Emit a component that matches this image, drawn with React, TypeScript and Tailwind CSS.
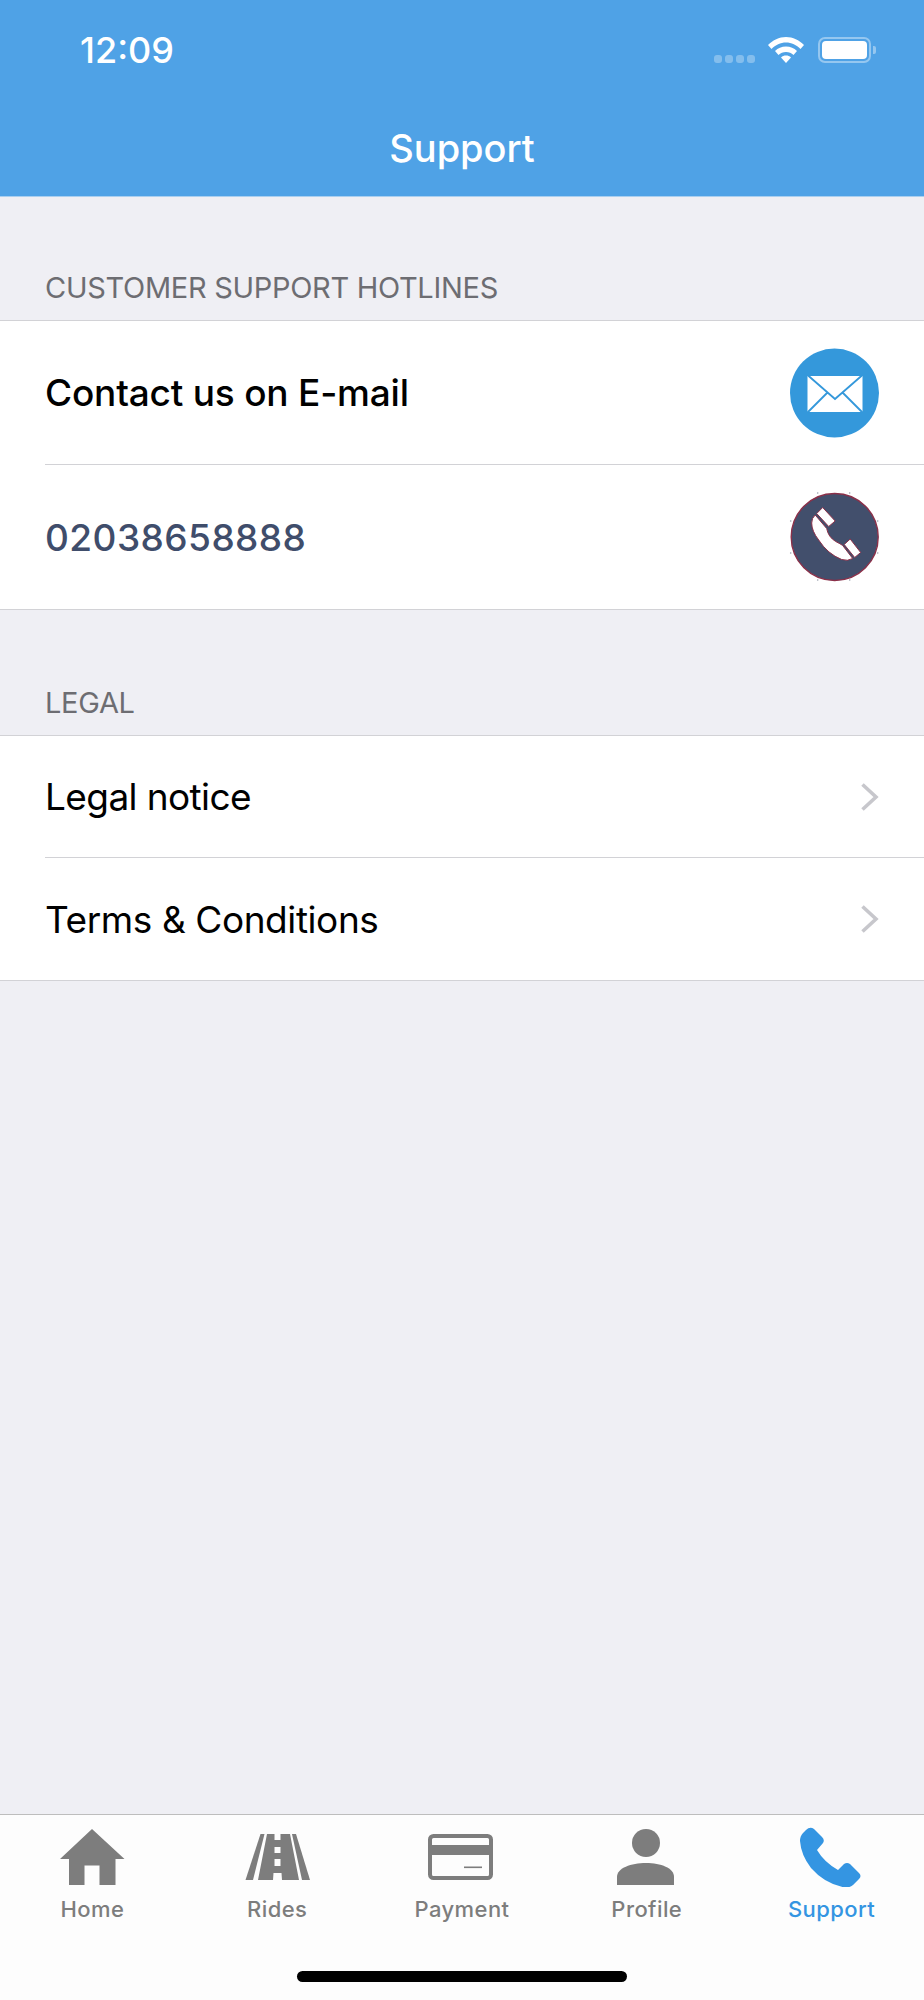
import React from "react";

const font = { fontFamily: "Inter, 'Liberation Sans', sans-serif" };

function Chevron() {
  return (
    <svg width="19" height="30" viewBox="0 0 19 30" fill="none" className="shrink-0">
      <path d="M2.5 2.5 L16 15 L2.5 27.5" stroke="#c7c7cc" strokeWidth="3.6" />
    </svg>
  );
}

function MailIcon() {
  return (
    <svg width="90" height="90" viewBox="0 0 90 90" className="shrink-0">
      <circle cx="45.5" cy="45" r="44.5" fill="#3498db" />
      <rect x="18.5" y="28" width="55" height="36" fill="#fff" />
      <path d="M18.5 27 L46 51 L73.5 27 M18.5 64.5 L38 45 M73.5 64.5 L54 45" fill="none" stroke="#3498db" strokeWidth="1.8" />
    </svg>
  );
}

function CallIcon() {
  const dots = [
    [28, 1], [60, 1], [1, 29], [1, 61], [88, 29], [88, 61], [28, 88], [60, 88],
  ];
  return (
    <svg width="90" height="90" viewBox="0 0 90 90" className="shrink-0">
      <g transform="translate(0.7 0)">
        <circle cx="45" cy="45" r="43.5" fill="#424f6c" stroke="#8b3049" strokeWidth="1.4" />
        {dots.map(([x, y]) => (
          <circle key={x * 100 + y} cx={x} cy={y} r="0.8" fill="#9aa0ad" />
        ))}
        <g fill="#fff" stroke="#8b3049" strokeWidth="1">
          <path d="M33 15.5 L45.5 29 L39 34.5 L27 21.5 Z" />
          <path d="M60.5 47 L71 60.5 L65 65.5 L54.5 52.5 Z" />
          <path d="M25.5 23 L37 36.5 Q38.5 45 46 49.5 Q51 52 53 53.5 L63 66.5 Q58 69.5 52 67.5 Q38 62 29 48 Q22 39 22 31 Q22 26 25.5 23 Z" />
        </g>
      </g>
    </svg>
  );
}

function TabIcon({ name }: { name: string }) {
  const c = "#7d7d7d";
  return (
    <svg width="80" height="60" viewBox="0 0 80 60">
      {name === "Home" && (
        <path fill={c} d="M40 2 L72.5 32 L63.5 32 L63.5 58 L47.5 58 L47.5 38.5 L32.5 38.5 L32.5 58 L17 58 L17 32 L8 32 Z" />
      )}
      {name === "Rides" && (
        <g fill={c}>
          <path d="M23.5 7 L27.5 7 L16 53 L8.5 53 Z" />
          <path d="M55 7 L59 7 L73 53 L65 53 Z" />
          <path fillRule="evenodd" d="M30 7 L53 7 L62 53 L21 53 Z M37.5 7 L37.5 13 L43.5 13 L43.5 7 Z M37.5 20 L37.5 26 L43.5 26 L43.5 20 Z M37.5 32 L37.5 39 L43.5 39 L43.5 32 Z M36.5 46 L36 53 L45 53 L44.5 46 Z" />
        </g>
      )}
      {name === "Payment" && (
        <g>
          <rect x="8" y="9" width="61" height="42" rx="3.5" fill="none" stroke={c} strokeWidth="4" />
          <rect x="8" y="18" width="61" height="10" fill={c} />
          <rect x="42" y="39.5" width="18" height="1.6" fill={c} />
        </g>
      )}
      {name === "Profile" && (
        <g fill={c}>
          <circle cx="39" cy="16" r="14" />
          <path d="M10 58 L10 50 C10 41 24 36 39 36 C54 36 67 41 67 50 L67 58 Z" />
        </g>
      )}
      {name === "Support" && (
        <path
          fill="#3495e2"
          transform="translate(8 0)"
          d="M6 3 Q10 -1 14 2 L22 10 Q25 13 23 16 L17 23 Q24 35 38 43 L44 37 Q47 35 50 37 L59 46 Q62 49 59 52 L53 58 Q49 61 45 60.5 Q25 57 11 41 Q1 28 0 14 Q0 9 3 6 Z"
        />
      )}
    </svg>
  );
}

function Sep() {
  return <div className="ml-[45px] h-px bg-[#d2d2d6]" />;
}

export default function App() {
  const tabs = ["Home", "Rides", "Payment", "Profile", "Support"];
  return (
    <div style={font} className="w-[924px] h-[2000px] flex flex-col bg-[#efeff4] overflow-hidden">
      <header className="h-[197px] shrink-0 bg-[#4fa2e6] border-b border-[#a9cff0] text-white">
        <div className="h-[64px] pt-[36px] pl-[80px] pr-[48px] flex items-center justify-between">
          <span className="text-[36px] leading-[44px] font-medium tracking-[0px]">12:09</span>
          <div className="flex items-center">
            <div className="flex gap-[3px] mt-[18px] mr-[13px]">
              <span className="w-[8px] h-[8px] rounded-[3px] bg-white/30" />
              <span className="w-[8px] h-[8px] rounded-[3px] bg-white/30" />
              <span className="w-[8px] h-[8px] rounded-[3px] bg-white/30" />
              <span className="w-[8px] h-[8px] rounded-[3px] bg-white/30" />
            </div>
            <svg width="36" height="26" viewBox="0 0 36 26" className="mr-[14px]">
              <path fill="#fff" d="M18 0 C25 0 31 3 36 8 L32.5 12 C28.5 8 23.5 5.5 18 5.5 C12.5 5.5 7.5 8 3.5 12 L0 8 C5 3 11 0 18 0 Z" />
              <path fill="#fff" d="M18 9.5 C22.5 9.5 26 11 29 14 L25.5 18 C23.5 16 21 15 18 15 C15 15 12.5 16 10.5 18 L7 14 C10 11 13.5 9.5 18 9.5 Z" />
              <path fill="#fff" d="M18 18.5 C20 18.5 21.5 19 23 20.5 L18 26 L13 20.5 C14.5 19 16 18.5 18 18.5 Z" />
            </svg>
            <div className="w-[53px] h-[26px] rounded-[7px] border-2 border-white/40 p-[2px]">
              <div className="w-full h-full rounded-[4px] bg-white" />
            </div>
            <span className="ml-[2px] w-[3px] h-[8px] rounded-r-[2px] bg-white/40" />
          </div>
        </div>
        <h1 className="mt-[60px] text-center text-[38px] leading-[48px] font-medium tracking-[-0.05px]">Support</h1>
      </header>

      <main className="flex-1">
        <div className="h-[123px] pl-[45px] pb-[14px] flex items-end">
          <span className="text-[29px] leading-[36px] text-[#6d6d72] tracking-[-0.3px]">CUSTOMER SUPPORT HOTLINES</span>
        </div>
        <section className="bg-white border-y border-[#d2d2d6]">
          <div className="h-[143px] pl-[45px] pr-[45px] flex items-center justify-between">
            <span className="text-[37px] font-medium text-black tracking-[-0.2px]">Contact us on E-mail</span>
            <MailIcon />
          </div>
          <Sep />
          <div className="h-[144px] pl-[45px] pr-[45px] flex items-center justify-between">
            <span className="mt-[2px] text-[37px] font-medium text-[#3f4d6b] tracking-[0.45px]">02038658888</span>
            <CallIcon />
          </div>
        </section>
        <div className="h-[125px] pl-[45px] pb-[14px] flex items-end">
          <span className="text-[29px] leading-[36px] text-[#6d6d72] tracking-[-0.3px]">LEGAL</span>
        </div>
        <section className="bg-white border-y border-[#d2d2d6]">
          <div className="h-[121px] pl-[45px] pr-[45px] flex items-center justify-between">
            <span className="text-[37px] text-black tracking-[-0.6px]">Legal notice</span>
            <Chevron />
          </div>
          <Sep />
          <div className="h-[122px] pl-[45px] pr-[45px] flex items-center justify-between">
            <span className="mt-[2px] text-[37px] text-black tracking-[-0.42px]">Terms &amp; Conditions</span>
            <Chevron />
          </div>
        </section>
      </main>

      <footer className="h-[186px] shrink-0 bg-[#fdfdfd] border-t border-[#bdbdbd]">
        <nav className="grid grid-cols-5 pt-[12px]">
          {tabs.map((t) => (
            <div key={t} className="flex flex-col items-center">
              <TabIcon name={t} />
              <span className={`mt-[8px] text-[22px] leading-[28px] font-medium tracking-[0.42px] ${t === "Support" ? "text-[#3495e2]" : "text-[#7d7d7d]"}`}>{t}</span>
            </div>
          ))}
        </nav>
        <div className="mt-[48px] mx-auto w-[330px] h-[11px] rounded-full bg-black" />
      </footer>
    </div>
  );
}
